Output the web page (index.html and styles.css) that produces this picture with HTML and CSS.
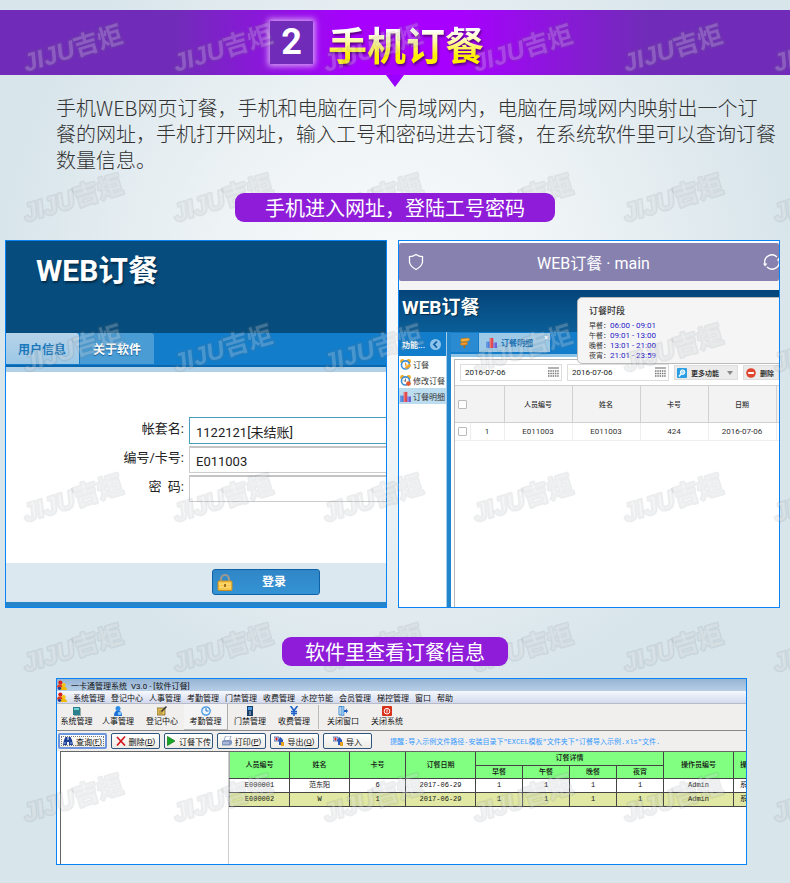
FILE: index.html
```html
<!DOCTYPE html>
<html lang="zh-CN">
<head>
    <meta charset="UTF-8">
    <meta name="viewport" content="width=device-width, initial-scale=1.0">
    <title>手机订餐</title>
    <link rel="stylesheet" href="styles.css">
</head>
<body>
    <!-- Icon sprite -->
    <svg class="sprite" aria-hidden="true">
        <symbol id="i-people" viewBox="0 0 12 12">
            <circle cx="4" cy="3" r="2.5" fill="#d8201c"/><path d="M0 9Q0 5 4 5T7 9Z" fill="#e03a20"/>
            <circle cx="8" cy="6" r="2.5" fill="#f5c414"/><path d="M4 12Q4 8 8 8T12 12Z" fill="#f0b800"/><circle cx="3" cy="10" r="2" fill="#2b3a8c"/>
        </symbol>
        <symbol id="i-clock-pen" viewBox="0 0 12 12">
            <circle cx="2.5" cy="2.5" r="2.4" fill="#f2ad22"/><circle cx="9.5" cy="2.5" r="2.4" fill="#f2ad22"/>
            <circle cx="6" cy="6.5" r="4.4" fill="#fff" stroke="#3f8fd6" stroke-width="1.8"/>
            <path d="M6 4v3l2-1" stroke="#d88a1a" fill="none"/><path d="M5 9l6-4 1 3-5 3z" fill="#f5a623"/>
        </symbol>
        <symbol id="i-clock-stop" viewBox="0 0 12 12">
            <circle cx="2.5" cy="2.5" r="2.4" fill="#f2ad22"/><circle cx="9.5" cy="2.5" r="2.4" fill="#f2ad22"/>
            <circle cx="6" cy="6.5" r="4.4" fill="#fff" stroke="#3f8fd6" stroke-width="1.8"/>
            <path d="M6 4v3l-2-1" stroke="#666" fill="none"/><circle cx="9.3" cy="9.3" r="2.6" fill="#e8582a"/>
        </symbol>
        <symbol id="i-chart" viewBox="0 0 12 12">
            <path d="M0 5h4v7H0z" fill="#4a86e0"/><path d="M4 1h4v11H4z" fill="#e2484c"/><path d="M8 6h4v6H8z" fill="#6a63d8"/>
            <path d="M1 5v7M5 1v11M9 6v6" stroke="#fff" stroke-opacity=".4" stroke-width=".8"/>
        </symbol>
        <symbol id="i-sign" viewBox="0 0 12 12">
            <path d="M5 1h1.800v11H5z" fill="#a86b1c"/><path d="M2 2l8-1 2 1.500-2 2-8 1z" fill="#f7b13c" stroke="#b5701a" stroke-width=".6"/>
            <path d="M9 5.500L3 6 1 7.500 3 9l6-.5z" fill="#f39b2b" stroke="#b5701a" stroke-width=".6"/>
        </symbol>
        <symbol id="i-calendar" viewBox="0 0 11 11">
            <path d="M0 1h11" stroke="#666" stroke-width="1"/>
            <path d="M0 4h11M0 6.500h11M0 9h11" stroke="#777" stroke-width="1.500" stroke-dasharray="1.500 .8" fill="none"/>
        </symbol>
        <symbol id="i-find" viewBox="0 0 10 10">
            <rect width="10" height="10" rx="1" fill="#2c9fe4"/><circle cx="5.600" cy="4.200" r="2.300" fill="#aee0fb" stroke="#fff"/><path d="M4 6L2 8.500" stroke="#fff" stroke-width="1.400"/>
        </symbol>
        <symbol id="i-minus" viewBox="0 0 10 10">
            <circle cx="5" cy="5" r="4.800" fill="#e0452f"/><path d="M2.200 4h5.600v2H2.200z" fill="#fff"/>
        </symbol>
        <symbol id="i-lock" viewBox="0 0 16 18">
            <path d="M4 9V6a4 4 0 0 1 8 0v3" fill="none" stroke="#9a9a92" stroke-width="2.200"/>
            <rect x="1" y="8" width="14" height="9.500" rx="1" fill="#f8c64a" stroke="#c98f1e"/><path d="M2 11h12M2 14h12" stroke="#ffe48a"/>
            <path d="M7.200 11h1.600v3H7.200z" fill="#8a5a10"/>
        </symbol>
        <symbol id="i-shield" viewBox="0 0 16 18">
            <path d="M8 1.500Q11 3.600 14.500 3.600V9Q14 13.500 8 16.500Q2 13.500 1.500 9V3.600Q5 3.600 8 1.500Z" fill="none" stroke="#fff" stroke-width="1.300"/>
        </symbol>
        <symbol id="i-refresh" viewBox="0 0 18 18">
            <path d="M2 11A7.200 7.200 0 0 1 14 4M16 7A7.200 7.200 0 0 1 4 14" fill="none" stroke="#fff" stroke-width="1.300"/>
            <path d="M0 10.500h4.500L2 13.500zM13.700 7.500h4.300L16 4.500z" fill="#fff"/>
        </symbol>
        <symbol id="i-back" viewBox="0 0 10 10">
            <circle cx="5" cy="5" r="5" fill="#8dc3ea"/><path d="M6.300 2.200L3.600 5l2.700 2.800" fill="none" stroke="#0f62a5" stroke-width="1.600"/>
        </symbol>
        <symbol id="i-server" viewBox="0 0 10 10"><path d="M1 1h7v8H1z" fill="#2e7f8c"/><path d="M2 2h5v2H2z" fill="#6ed1d4"/><path d="M8 2h1v8H2V9h6z" fill="#9aa"/></symbol>
        <symbol id="i-user" viewBox="0 0 10 10"><circle cx="5" cy="2.500" r="2.500" fill="#2f8fe8"/><path d="M1 10Q1 4.500 5 4.500T9 10Z" fill="#1d6fd6"/><circle cx="6.500" cy="7.500" r="1.800" fill="#7cc6f8"/></symbol>
        <symbol id="i-note" viewBox="0 0 10 10"><path d="M0 2h8v7H0z" fill="#e6c35a" stroke="#6b5518" stroke-width=".7"/><path d="M1.500 5h4M1.500 7h4" stroke="#7a6220" stroke-width=".7"/><path d="M4 5l5-5 1 1-5 5z" fill="#333"/></symbol>
        <symbol id="i-time" viewBox="0 0 10 10"><circle cx="5" cy="5" r="4.200" fill="#eaf6ff" stroke="#3a92e4" stroke-width="1.200"/><path d="M5 2v3h2.500" fill="none" stroke="#1c5fae" stroke-width=".9"/></symbol>
        <symbol id="i-door" viewBox="0 0 10 10"><path d="M2 0h6v10H2z" fill="#1c3f6a"/><path d="M3 1h4v3H3z" fill="#4e9ee6"/><path d="M4 6h2M4 8h2" stroke="#cfe4fa" stroke-width=".8"/></symbol>
        <symbol id="i-yen" viewBox="0 0 10 10"><path d="M1.500 0L5 4.500 8.500 0M5 4.500V10M2 5.500h6M2 7.500h6" fill="none" stroke="#1d62c8" stroke-width="1.600"/></symbol>
        <symbol id="i-exit" viewBox="0 0 10 10"><path d="M4 .5H1v8.500h3" fill="none" stroke="#3c8ed8"/><path d="M3 1l3-1v10L3 9z" fill="#8fc6f2" stroke="#2a6fb8" stroke-width=".5"/><path d="M6 4h2V2.500L10 5 8 7.500V6H6z" fill="#1b5fc4"/></symbol>
        <symbol id="i-power" viewBox="0 0 10 10"><rect width="10" height="10" rx="1" fill="#d9301a"/><circle cx="5" cy="5.200" r="2.800" fill="none" stroke="#fff"/><path d="M5 3.500v3" stroke="#fff"/></symbol>
        <symbol id="i-binoculars" viewBox="0 0 10 10"><path d="M1 4l1.500-3h2v3h1V1h2L9 4l1 5H6V6H4v3H0z" fill="#1c3f96"/><path d="M1 7h2M7 7h2" stroke="#8fb2f0"/></symbol>
        <symbol id="i-cross" viewBox="0 0 10 10"><path d="M1 1l8 8.500M9 .5L1 9.500" stroke="#d4141c" stroke-width="1.600"/></symbol>
        <symbol id="i-play" viewBox="0 0 10 10"><path d="M1.500 .5L9 5 1.500 9.500z" fill="#17a827" stroke="#0b7016" stroke-width=".7"/></symbol>
        <symbol id="i-print" viewBox="0 0 10 10"><path d="M3.500 0H9L7.500 5H2z" fill="#fff" stroke="#5a77a8" stroke-width=".6"/><path d="M0 5l2-1h7l1 1v3L8 9.500H0z" fill="#8397bf"/><path d="M1 7h6" stroke="#eef" stroke-width=".8"/></symbol>
        <symbol id="i-port" viewBox="0 0 10 10"><path d="M0 1h5v4H0z" fill="#e4edfb" stroke="#27479c" stroke-width=".7"/><path d="M1 3h3M2.500 1.500v3" stroke="#d82020"/><path d="M4 4l2.500-3L9 4v5H5V6z" fill="#2b55b8"/><path d="M7 6h3v4H7z" fill="#e6a020"/></symbol>
    </svg>

    <div class="page">
        <header class="banner">
            <span class="banner-no">2</span>
            <h1>手机订餐</h1>
        </header>

        <p class="intro">手机WEB网页订餐，手机和电脑在同个局域网内，电脑在局域网内映射出一个订<br>餐的网址，手机打开网址，输入工号和密码进去订餐，在系统软件里可以查询订餐<br>数量信息。</p>

        <h2 class="pill pill-wide">手机进入网址，登陆工号密码</h2>

        <div class="phones">
            <!-- Login screen -->
            <section class="shot login">
                <div class="login-head">WEB订餐</div>
                <div class="login-tabs">
                    <button class="tab active" type="button">用户信息</button>
                    <button class="tab" type="button">关于软件</button>
                </div>
                <form class="login-form">
                    <label for="account">帐套名:</label>
                    <input id="account" class="focused" type="text" value="1122121[未结账]">
                    <label for="card">编号/卡号:</label>
                    <input id="card" type="text" value="E011003">
                    <label for="password">密&nbsp; 码:</label>
                    <input id="password" type="password">
                </form>
                <div class="login-foot">
                    <button type="button"><svg><use href="#i-lock"/></svg><span>登录</span></button>
                </div>
            </section>

            <!-- Order detail screen -->
            <section class="shot main">
                <div class="browser-bar">
                    <svg><use href="#i-shield"/></svg>
                    <span>WEB订餐 · main</span>
                    <svg class="refresh"><use href="#i-refresh"/></svg>
                </div>
                <div class="main-head">WEB订餐</div>
                <div class="main-body">
                    <nav class="side">
                        <div class="side-title">功能...<svg><use href="#i-back"/></svg></div>
                        <a href="#"><svg><use href="#i-clock-pen"/></svg>订餐</a>
                        <a href="#"><svg><use href="#i-clock-stop"/></svg>修改订餐</a>
                        <a href="#" class="active"><svg><use href="#i-chart"/></svg>订餐明细</a>
                    </nav>
                    <div class="work">
                        <div class="work-tabs">
                            <button class="home-tab" type="button" aria-label="首页"><svg><use href="#i-sign"/></svg></button>
                            <button class="detail-tab" type="button"><svg><use href="#i-chart"/></svg>订餐明细<i>×</i></button>
                        </div>
                        <div class="grid-panel">
                            <div class="filters">
                                <div class="date"><input type="text" value="2016-07-06" aria-label="开始日期"><svg><use href="#i-calendar"/></svg></div>
                                <div class="date"><input type="text" value="2016-07-06" aria-label="结束日期"><svg><use href="#i-calendar"/></svg></div>
                                <button type="button"><svg><use href="#i-find"/></svg>更多功能<i class="caret"></i></button>
                                <button type="button"><svg><use href="#i-minus"/></svg>删除</button>
                            </div>
                            <table class="orders">
                                <colgroup><col class="c-check"><col class="c-num"><col class="c-data"><col class="c-data"><col class="c-data"><col class="c-data"><col class="c-data"></colgroup>
                                <thead>
                                    <tr><th class="no-line"><input type="checkbox" aria-label="全选"></th><th></th><th>人员编号</th><th>姓名</th><th>卡号</th><th>日期</th><th></th></tr>
                                </thead>
                                <tbody>
                                    <tr><td><input type="checkbox" aria-label="选择第1行"></td><td>1</td><td>E011003</td><td>E011003</td><td>424</td><td>2016-07-06</td><td></td></tr>
                                </tbody>
                            </table>
                        </div>
                    </div>
                </div>
                <div class="periods">
                    <h3>订餐时段</h3>
                    <p>早餐：<b>06:00 - 09:01</b></p>
                    <p>午餐：<b>09:01 - 13:00</b></p>
                    <p>晚餐：<b>13:01 - 21:00</b></p>
                    <p>夜宵：<b>21:01 - 23:59</b></p>
                </div>
            </section>
        </div>

        <h2 class="pill">软件里查看订餐信息</h2>

        <!-- Desktop software -->
        <section class="shot desktop">
            <div class="win-title"><svg><use href="#i-people"/></svg>一卡通管理系统&nbsp; V3.0 - [软件订餐]</div>
            <nav class="win-menu">
                <svg><use href="#i-people"/></svg>
                <a href="#">系统管理</a><a href="#">登记中心</a><a href="#">人事管理</a><a href="#">考勤管理</a><a href="#">门禁管理</a><a href="#">收费管理</a><a href="#">水控节能</a><a href="#">会员管理</a><a href="#">梯控管理</a><a href="#">窗口</a><a href="#">帮助</a>
            </nav>
            <div class="win-tools">
                <button type="button"><svg><use href="#i-server"/></svg>系统管理</button>
                <button type="button"><svg><use href="#i-user"/></svg>人事管理</button>
                <button type="button"><svg><use href="#i-note"/></svg>登记中心</button>
                <button type="button" class="raised"><svg><use href="#i-time"/></svg>考勤管理</button>
                <button type="button"><svg><use href="#i-door"/></svg>门禁管理</button>
                <button type="button"><svg><use href="#i-yen"/></svg>收费管理</button>
                <span class="sep"></span>
                <button type="button"><svg><use href="#i-exit"/></svg>关闭窗口</button>
                <button type="button"><svg><use href="#i-power"/></svg>关闭系统</button>
            </div>
            <div class="win-actions">
                <button type="button" class="default"><svg><use href="#i-binoculars"/></svg>查询(<u>F</u>)</button>
                <button type="button"><svg><use href="#i-cross"/></svg>删除(<u>D</u>)</button>
                <button type="button"><svg><use href="#i-play"/></svg>订餐下传</button>
                <button type="button"><svg><use href="#i-print"/></svg>打印(<u>P</u>)</button>
                <button type="button"><svg><use href="#i-port"/></svg>导出(<u>Q</u>)</button>
                <button type="button"><svg><use href="#i-port"/></svg>导入</button>
                <span class="hint">提醒:导入示例文件路径-安装目录下"EXCEL模板"文件夹下"订餐导入示例.xls"文件.</span>
            </div>
            <div class="win-body">
                <div class="tree"></div>
                <div class="sheet-wrap">
                    <table class="sheet">
                        <colgroup><col class="w-id"><col class="w-name"><col class="w-card"><col class="w-date"><col class="w-meal"><col class="w-meal"><col class="w-meal"><col class="w-meal"><col class="w-date"><col class="w-date"></colgroup>
                        <thead>
                            <tr><th rowspan="2">人员编号</th><th rowspan="2">姓名</th><th rowspan="2">卡号</th><th rowspan="2">订餐日期</th><th colspan="4">订餐详情</th><th rowspan="2">操作员编号</th><th rowspan="2" class="cut">操</th></tr>
                            <tr><th>早餐</th><th>午餐</th><th>晚餐</th><th>夜宵</th></tr>
                        </thead>
                        <tbody>
                            <tr><td>E000001</td><td>范东阳</td><td>6</td><td>2017-06-29</td><td>1</td><td>1</td><td>1</td><td>1</td><td>Admin</td><td class="cut">系</td></tr>
                            <tr><td>E000002</td><td>W</td><td>1</td><td>2017-06-29</td><td>1</td><td>1</td><td>1</td><td>1</td><td>Admin</td><td class="cut">系</td></tr>
                        </tbody>
                    </table>
                </div>
            </div>
        </section>

        <!-- Repeating brand mark -->
        <svg class="watermark" aria-hidden="true">
            <defs>
                <pattern id="mark" width="150" height="150" patternUnits="userSpaceOnUse">
                    <text x="26" y="72" transform="rotate(-17 26 72)"><tspan class="latin">JIJU</tspan>吉炬</text>
                </pattern>
            </defs>
            <rect width="100%" height="100%" fill="url(#mark)"/>
        </svg>
    </div>
</body>
</html>
```

FILE: styles.css
```css
* {
    box-sizing: border-box;
}

body {
    margin: 0;
    font-family: Roboto, "Noto Sans CJK SC", sans-serif;
    background: #d8e5eb;
}

button, input {
    font-family: inherit;
    margin: 0;
}

button {
    cursor: pointer;
}

a {
    color: inherit;
    text-decoration: none;
}

.sprite {
    display: none;
}

.page {
    position: relative;
    overflow: hidden;
    padding: 10px 0 19px;
    background: radial-gradient(ellipse 400px 420px at 50% 290px, #f9fbfb 0%, #eef3f5 45%, #d8e5eb 100%);
}

/* Banner */
.banner {
    position: relative;
    display: flex;
    justify-content: center;
    align-items: center;
    gap: 15px;
    height: 65px;
    padding-right: 36px;
    background: linear-gradient(90deg, #702cb8 0%, #702cb8 22%, #a800ff 45%, #a800ff 58%, #702cb8 82%, #702cb8 100%);
}

.banner::after {
    content: "";
    position: absolute;
    top: 100%;
    left: 50%;
    margin-left: -9px;
    border: 9px solid transparent;
    border-top: 12px solid #9a00ff;
    border-bottom: 0;
}

.banner-no {
    width: 43px;
    height: 43px;
    background: #702cb8;
    box-shadow: 0 0 6px 2px #d9a6f5;
    color: #fff;
    font: bold 36px/43px Roboto, sans-serif;
    text-align: center;
}

.banner h1 {
    margin: 0;
    font: 700 39px/52px "Noto Sans CJK SC", sans-serif;
    background: linear-gradient(#fff 25%, #fffbb0 45%, #ffee00 75%);
    -webkit-background-clip: text;
    background-clip: text;
    color: transparent;
    filter: drop-shadow(1px 2px 1px rgba(60, 0, 80, 0.7));
}

.intro {
    margin: 20px 0 20px 56px;
    font: 300 20px/26px "Noto Sans CJK SC", sans-serif;
    color: #333;
    white-space: nowrap;
}

.pill {
    position: relative;
    z-index: 2;
    width: fit-content;
    margin: 0 auto;
    padding: 0 23px;
    border-radius: 9px;
    background: #8e1cd8;
    color: #fff;
    font: 400 20px/29px "Noto Sans CJK SC", sans-serif;
}

.pill-wide {
    padding: 0 30px;
}

.shot {
    position: relative;
    overflow: hidden;
    border: 1px solid #0a84f5;
    background: #fff;
}

.phones {
    display: grid;
    grid-template-columns: 1fr 1fr;
    gap: 11px;
    margin: 18px 10px 29px 5px;
}

/* Login screen */
.login {
    display: flex;
    flex-direction: column;
}

.login-head {
    height: 92px;
    padding: 12px 30px;
    background: #064c7c;
    color: #fff;
    font-size: 30px;
    font-weight: bold;
    line-height: 36px;
    text-shadow: 1px 2px 2px #022c4c;
}

.login-tabs {
    display: flex;
    gap: 1px;
    height: 39px;
    background: #127dcb;
    border-bottom: 5px solid #b0d1e8;
    box-shadow: inset 0 -2px #0a68b0;
}

.tab {
    height: 31px;
    padding: 0 13px;
    border: 0;
    border-radius: 0 3px 0 0;
    background: #4a9cd5;
    color: #fff;
    font-size: 12px;
    font-weight: bold;
    text-shadow: 0 1px 1px #1c5e92;
}

.tab.active {
    padding: 0 13px 0 12px;
    background: linear-gradient(#b6d3e9, #9cc8e6);
    color: #1a78bc;
    text-shadow: none;
}

.login-form {
    display: grid;
    grid-template-columns: 178px 1fr;
    column-gap: 5px;
    row-gap: 2px;
    margin: 45px 0 61px;
    font-size: 13px;
    color: #222;
}

.login-form label {
    line-height: 24px;
    text-align: right;
}

.login-form input {
    height: 27px;
    width: 110%;
    padding: 2px 6px 0;
    border: 1px solid #ccc;
    border-top: 2px solid #c4c4c4;
    background: #fff;
    color: #222;
    font-size: 13px;
}

.login-form input.focused {
    border: 1px solid #4a9dbd;
}

.login-foot {
    flex: 1;
    display: flex;
    align-items: flex-start;
    padding: 6px 0 7px 206px;
    background: #dce8ef;
    border-bottom: 5px solid #2585c8;
}

.login-foot button {
    display: flex;
    align-items: center;
    width: 108px;
    height: 26px;
    padding: 0 4px;
    border: 1px solid #0d62a8;
    border-radius: 3px;
    background: linear-gradient(#2f86c6, #3593d4);
    color: #fff;
    font-size: 12px;
    font-weight: bold;
}

.login-foot svg {
    width: 16px;
    height: 18px;
}

.login-foot span {
    flex: 1;
    padding-bottom: 3px;
}

/* Order detail screen */
.main {
    display: flex;
    flex-direction: column;
    font-size: 8px;
    color: #333;
}

.browser-bar {
    display: flex;
    justify-content: space-between;
    align-items: center;
    margin-top: 2px;
    height: 38px;
    padding-left: 9px;
    border-radius: 2px;
    background: #8681af;
    color: #fff;
    font-size: 16px;
}

.browser-bar svg {
    width: 16px;
    height: 18px;
}

.browser-bar .refresh {
    width: 18px;
    margin-right: -2px;
}

.main-head {
    height: 51px;
    padding: 3px;
    border-top: 9px solid #f4f4f4;
    background: linear-gradient(#04457a, #0a5e98);
    background-clip: padding-box;
    color: #fff;
    font-size: 19px;
    font-weight: bold;
    line-height: 30px;
    text-shadow: 1px 1px 1px #022c4c;
}

.main-body {
    flex: 1;
    display: flex;
}

.side {
    width: 48px;
    flex: none;
    border-right: 1px solid #a5cbe6;
}

.side a {
    display: flex;
    align-items: center;
    gap: 2px;
    height: 16px;
    padding-left: 1px;
    white-space: nowrap;
}

.side a svg {
    width: 11px;
    height: 11px;
    flex: none;
}

.side a.active {
    background: #bcdcf0;
}

.side-title {
    display: flex;
    justify-content: space-between;
    align-items: center;
    height: 24px;
    padding: 0 5px 0 3px;
    background: #127dcb;
    color: #fff;
    font-weight: bold;
}

.side-title svg {
    width: 11px;
    height: 11px;
}

.work {
    flex: 1;
    min-width: 0;
    display: flex;
    flex-direction: column;
    border-left: 4px solid #2386cc;
}

.work-tabs {
    display: flex;
    gap: 1px;
    height: 25px;
    padding-top: 1px;
    background: #127dcb;
    border-bottom: 3px solid #8fc3e6;
}

.work-tabs button {
    display: flex;
    align-items: center;
    height: 19px;
    padding: 0 8px;
    border: 0;
    background: #2a8bd2;
    color: #1870b4;
    font-size: 8px;
    font-weight: bold;
}

.work-tabs svg {
    width: 11px;
    height: 11px;
    margin-right: 4px;
}

.work-tabs .home-tab svg {
    margin-right: 0;
}

.work-tabs .detail-tab {
    padding: 0 2px 0 7px;
    background: #9fcae7;
}

.detail-tab i {
    align-self: flex-start;
    margin-left: 11px;
    color: #fff;
    font-style: normal;
}

.grid-panel {
    flex: 1;
    margin: 2px 0 0 3px;
    border: 1px solid #b8b8b8;
    border-right: 0;
    border-bottom: 0;
}

.filters {
    display: flex;
    align-items: center;
    gap: 5px;
    height: 25px;
    padding-left: 5px;
}

.date {
    display: flex;
    align-items: center;
    flex: none;
    width: 102px;
    height: 17px;
    padding: 0 2px 0 4px;
    border: 1px solid #ddd;
}

.date input {
    flex: 1;
    min-width: 0;
    padding: 0;
    border: 0;
    font-size: 8px;
    color: #222;
}

.date svg {
    width: 11px;
    height: 11px;
}

.filters button {
    display: flex;
    align-items: center;
    gap: 4px;
    flex: none;
    height: 15px;
    padding: 0 4px 0 2px;
    border: 1px solid #ddd;
    background: #ebebeb;
    color: #333;
    font-size: 7px;
    font-weight: bold;
}

.filters button svg {
    width: 10px;
    height: 10px;
}

.caret {
    margin-left: 4px;
    border: 3px solid transparent;
    border-top: 4px solid #888;
    border-bottom: 0;
}

.orders {
    width: 389px;
    table-layout: fixed;
    border-collapse: collapse;
    text-align: center;
}

.orders th {
    height: 37px;
    padding: 0;
    border: 1px solid #d0d0d0;
    border-left: 0;
    background: #f3f3f3;
    font-size: 7px;
    font-weight: 500;
}

.orders th.no-line {
    border-right: 0;
}

.orders td {
    height: 18px;
    padding: 0;
    border: 1px solid #eee;
    border-left: 0;
}

.orders input {
    appearance: none;
    display: block;
    width: 9px;
    height: 9px;
    margin: 0 0 0 3px;
    border: 1px solid #bbb;
    border-radius: 1px;
    background: #fff;
}

.c-check {
    width: 15px;
}

.c-num {
    width: 34px;
}

.c-data {
    width: 68px;
}

.periods {
    position: absolute;
    top: 56px;
    right: -6px;
    width: 208px;
    height: 67px;
    padding: 7px 11px;
    border: 1px solid #bbb;
    border-radius: 5px;
    background: #f5f5f5;
}

.periods h3 {
    margin: 0 0 4px;
    font-size: 9px;
    font-weight: 500;
    line-height: 12px;
}

.periods p {
    margin: 0;
    font-size: 7px;
    line-height: 9px;
}

.periods b {
    color: #2a20c8;
    font-size: 8px;
    font-weight: 400;
}

/* Desktop software */
.desktop {
    margin: 12px 43px 0 56px;
    font-size: 8px;
    color: #111;
    white-space: nowrap;
}

.win-title {
    display: flex;
    align-items: center;
    gap: 4px;
    height: 12px;
    background: linear-gradient(#96b4d4, #b7cee6);
}

.desktop svg {
    width: 10px;
    height: 10px;
    flex: none;
}

.win-menu {
    display: flex;
    align-items: center;
    gap: 6px;
    height: 13px;
    background: linear-gradient(#f6f8fd, #d3daee);
    border-bottom: 1px solid #b8bcc8;
}

.win-tools {
    display: flex;
    height: 27px;
    background: #f0efee;
    border-bottom: 1px solid #888;
}

.win-tools button {
    display: flex;
    flex-direction: column;
    align-items: center;
    justify-content: center;
    width: 44px;
    padding: 0;
    border: 0;
    background: none;
    font-size: 8px;
    line-height: 12px;
    color: #111;
}

.win-tools button:first-child {
    width: 39px;
}

.win-tools .raised {
    border-right: 1px solid #aaa;
    border-bottom: 1px solid #bbb;
    background: #f4f4f4;
}

.sep {
    width: 1px;
    margin: 1px 2px;
    background: #bbb;
}

.win-actions {
    display: flex;
    align-items: center;
    gap: 4px;
    height: 20px;
    padding-left: 1px;
    background: #f0efee;
}

.win-actions button {
    display: flex;
    align-items: center;
    justify-content: center;
    width: 49px;
    height: 16px;
    flex: none;
    padding: 0;
    border: 1px solid #2d5580;
    border-radius: 2px;
    background: linear-gradient(#fff, #eceae4);
    color: #111;
    font-size: 8px;
}

.win-actions .default {
    border: 2px solid #6f95dc;
    outline: 1px dotted #777;
    outline-offset: -4px;
}

.win-actions svg {
    margin-right: 3px;
}

.hint {
    margin-left: 14px;
    color: #3399ff;
    font: 7px "Liberation Mono", "Noto Sans CJK SC", monospace;
}

.win-body {
    display: flex;
    height: 113px;
    margin-left: 3px;
    border-top: 1px solid #666;
    border-left: 1px solid #666;
}

.tree {
    width: 168px;
    flex: none;
    border-right: 1px solid #ccc;
}

.sheet-wrap {
    flex: 1;
    min-width: 0;
    overflow: hidden;
}

.sheet {
    width: 571px;
    table-layout: fixed;
    border-collapse: collapse;
    text-align: center;
    font-family: "Liberation Mono", "Noto Sans CJK SC", monospace;
    font-size: 7px;
    line-height: 10px;
}

.sheet th, .sheet td {
    padding: 0;
    border: 1px solid #444;
}

.sheet th {
    height: 13px;
    background: #80ff80;
    font-weight: 500;
}

.sheet tr:first-child th {
    border-top: 0;
}

.sheet td {
    height: 14px;
}

.sheet tr > :first-child {
    border-left-color: #aaa;
}

.sheet tbody tr:last-child {
    background: #e0e8a4;
}

.sheet .cut {
    padding-left: 6px;
    text-align: left;
}

.w-id, .w-name {
    width: 60px;
}

.w-card {
    width: 56px;
}

.w-date {
    width: 70px;
}

.w-meal {
    width: 47px;
}

/* Watermark */
.watermark {
    position: absolute;
    top: 0;
    left: 0;
    width: 100%;
    height: 100%;
    pointer-events: none;
}

.watermark text {
    font: bold 25px "Noto Sans CJK SC", sans-serif;
    fill: rgba(255, 255, 255, 0.2);
    stroke: rgba(100, 108, 115, 0.13);
    stroke-width: 3px;
    stroke-linejoin: round;
    paint-order: stroke;
}

.watermark .latin {
    font-family: "Liberation Sans", sans-serif;
    font-style: italic;
}
```
